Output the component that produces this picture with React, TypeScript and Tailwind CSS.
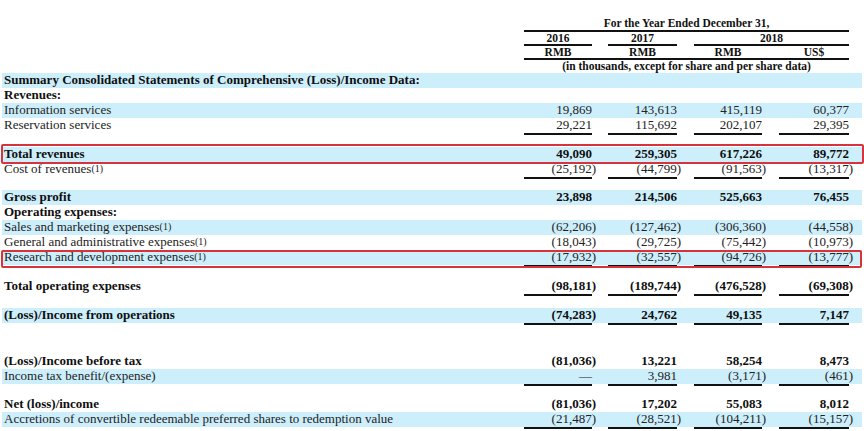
const cols = 'grid grid-cols-[522px_68px_16px_69px_17px_68px_17px_70px_8px]'

type Row = {
  label?: string
  note?: boolean
  vals?: string[]
  bold?: boolean
  blue?: boolean
  line?: boolean
  box?: string
  gap?: string
}

const rows: Row[] = [
  { label: 'Summary Consolidated Statements of Comprehensive (Loss)/Income Data:', bold: true, blue: true },
  { label: 'Revenues:', bold: true },
  { label: 'Information services', blue: true, vals: ['19,869', '143,613', '415,119', '60,377'] },
  { label: 'Reservation services', line: true, vals: ['29,221', '115,692', '202,107', '29,395'] },
  { gap: 'h-[14px]' },
  {
    label: 'Total revenues',
    bold: true,
    blue: true,
    box: '-top-[3px] -bottom-[2px] -left-[1px] -right-[2px]',
    vals: ['49,090', '259,305', '617,226', '89,772'],
  },
  { label: 'Cost of revenues', note: true, line: true, vals: ['(25,192)', '(44,799)', '(91,563)', '(13,317)'] },
  { gap: 'h-[13px]' },
  { label: 'Gross profit', bold: true, blue: true, vals: ['23,898', '214,506', '525,663', '76,455'] },
  { label: 'Operating expenses:', bold: true },
  { label: 'Sales and marketing expenses', note: true, blue: true, vals: ['(62,206)', '(127,462)', '(306,360)', '(44,558)'] },
  { label: 'General and administrative expenses', note: true, vals: ['(18,043)', '(29,725)', '(75,442)', '(10,973)'] },
  {
    label: 'Research and development expenses',
    note: true,
    blue: true,
    line: true,
    box: 'top-0 -bottom-[3px] -left-[1px] right-0',
    vals: ['(17,932)', '(32,557)', '(94,726)', '(13,777)'],
  },
  { gap: 'h-[14px]' },
  { label: 'Total operating expenses', bold: true, line: true, vals: ['(98,181)', '(189,744)', '(476,528)', '(69,308)'] },
  { gap: 'h-[14px]' },
  { label: '(Loss)/Income from operations', bold: true, blue: true, line: true, vals: ['(74,283)', '24,762', '49,135', '7,147'] },
  { gap: 'h-[31px]' },
  { label: '(Loss)/Income before tax', bold: true, vals: ['(81,036)', '13,221', '58,254', '8,473'] },
  { label: 'Income tax benefit/(expense)', blue: true, line: true, vals: ['—', '3,981', '(3,171)', '(461)'] },
  { gap: 'h-[13px]' },
  { label: 'Net (loss)/income', bold: true, vals: ['(81,036)', '17,202', '55,083', '8,012'] },
  { label: 'Accretions of convertible redeemable preferred shares to redemption value', blue: true, line: true, vals: ['(21,487)', '(28,521)', '(104,211)', '(15,157)'] },
]

function Num({ v, line }: { v: string; line?: boolean }) {
  const neg = v.startsWith('(')
  return (
    <div className={`text-right whitespace-nowrap leading-[14px] ${line ? 'shadow-[0_2px_0_#111]' : ''}`}>
      {neg ? v.slice(0, -1) : v}
      {neg && <span className="-mr-[4px]">)</span>}
    </div>
  )
}

export default function App() {
  return (
    <div
      className="w-[864px] h-[431px] bg-white overflow-hidden px-[2px] pt-[16px] text-[13px] text-[#222]"
      style={{ fontFamily: '"Liberation Serif", "Times New Roman", serif' }}
    >
      {/* column headings */}
      <div className={`${cols} font-bold text-[#111] text-[11.5px]`}>
        <div className="col-start-2 col-span-7 text-center h-[14px] leading-[14px] whitespace-nowrap">
          For the Year Ended December 31,
        </div>
        <div className="col-start-2 col-span-7 h-[2px] bg-[#111]" />

        <div className="col-start-2 text-center h-[12px] leading-[12px]">2016</div>
        <div className="col-start-4 text-center h-[12px] leading-[12px]">2017</div>
        <div className="col-start-6 col-span-3 text-center h-[12px] leading-[12px]">2018</div>
        <div className="col-start-2 h-[2px] bg-[#111]" />
        <div className="col-start-4 h-[2px] bg-[#111]" />
        <div className="col-start-6 col-span-3 h-[2px] bg-[#111]" />

        <div className="col-start-2 text-center h-[12px] leading-[12px]">RMB</div>
        <div className="col-start-4 text-center h-[12px] leading-[12px]">RMB</div>
        <div className="col-start-6 text-center h-[12px] leading-[12px]">RMB</div>
        <div className="col-start-8 text-center h-[12px] leading-[12px]">US$</div>
        <div className="col-start-2 col-span-7 h-[2px] bg-[#111]" />

        <div className="col-start-2 col-span-7 text-center h-[13px] leading-[13px] whitespace-nowrap">
          (in thousands, except for share and per share data)
        </div>
      </div>

      {/* body */}
      {rows.map((r, i) =>
        r.gap ? (
          <div key={i} className={r.gap} />
        ) : (
          <div
            key={i}
            className={`${cols} relative h-[15px] leading-[14px] ${r.blue ? 'bg-[#cdeefb]' : ''} ${
              r.bold ? 'font-bold text-[#0f0f0f]' : ''
            }`}
          >
            <div className="pl-[2px] whitespace-nowrap">
              {r.label}
              {r.note && <span className="text-[10px] relative -top-[1px]">(1)</span>}
            </div>
            {r.vals && (
              <>
                <Num v={r.vals[0]} line={r.line} />
                <div />
                <Num v={r.vals[1]} line={r.line} />
                <div />
                <Num v={r.vals[2]} line={r.line} />
                <div />
                <Num v={r.vals[3]} line={r.line} />
              </>
            )}
            {r.box && (
              <span className={`absolute ${r.box} border-2 border-[#d8333a] rounded-[2px] pointer-events-none`} />
            )}
          </div>
        )
      )}
    </div>
  )
}
